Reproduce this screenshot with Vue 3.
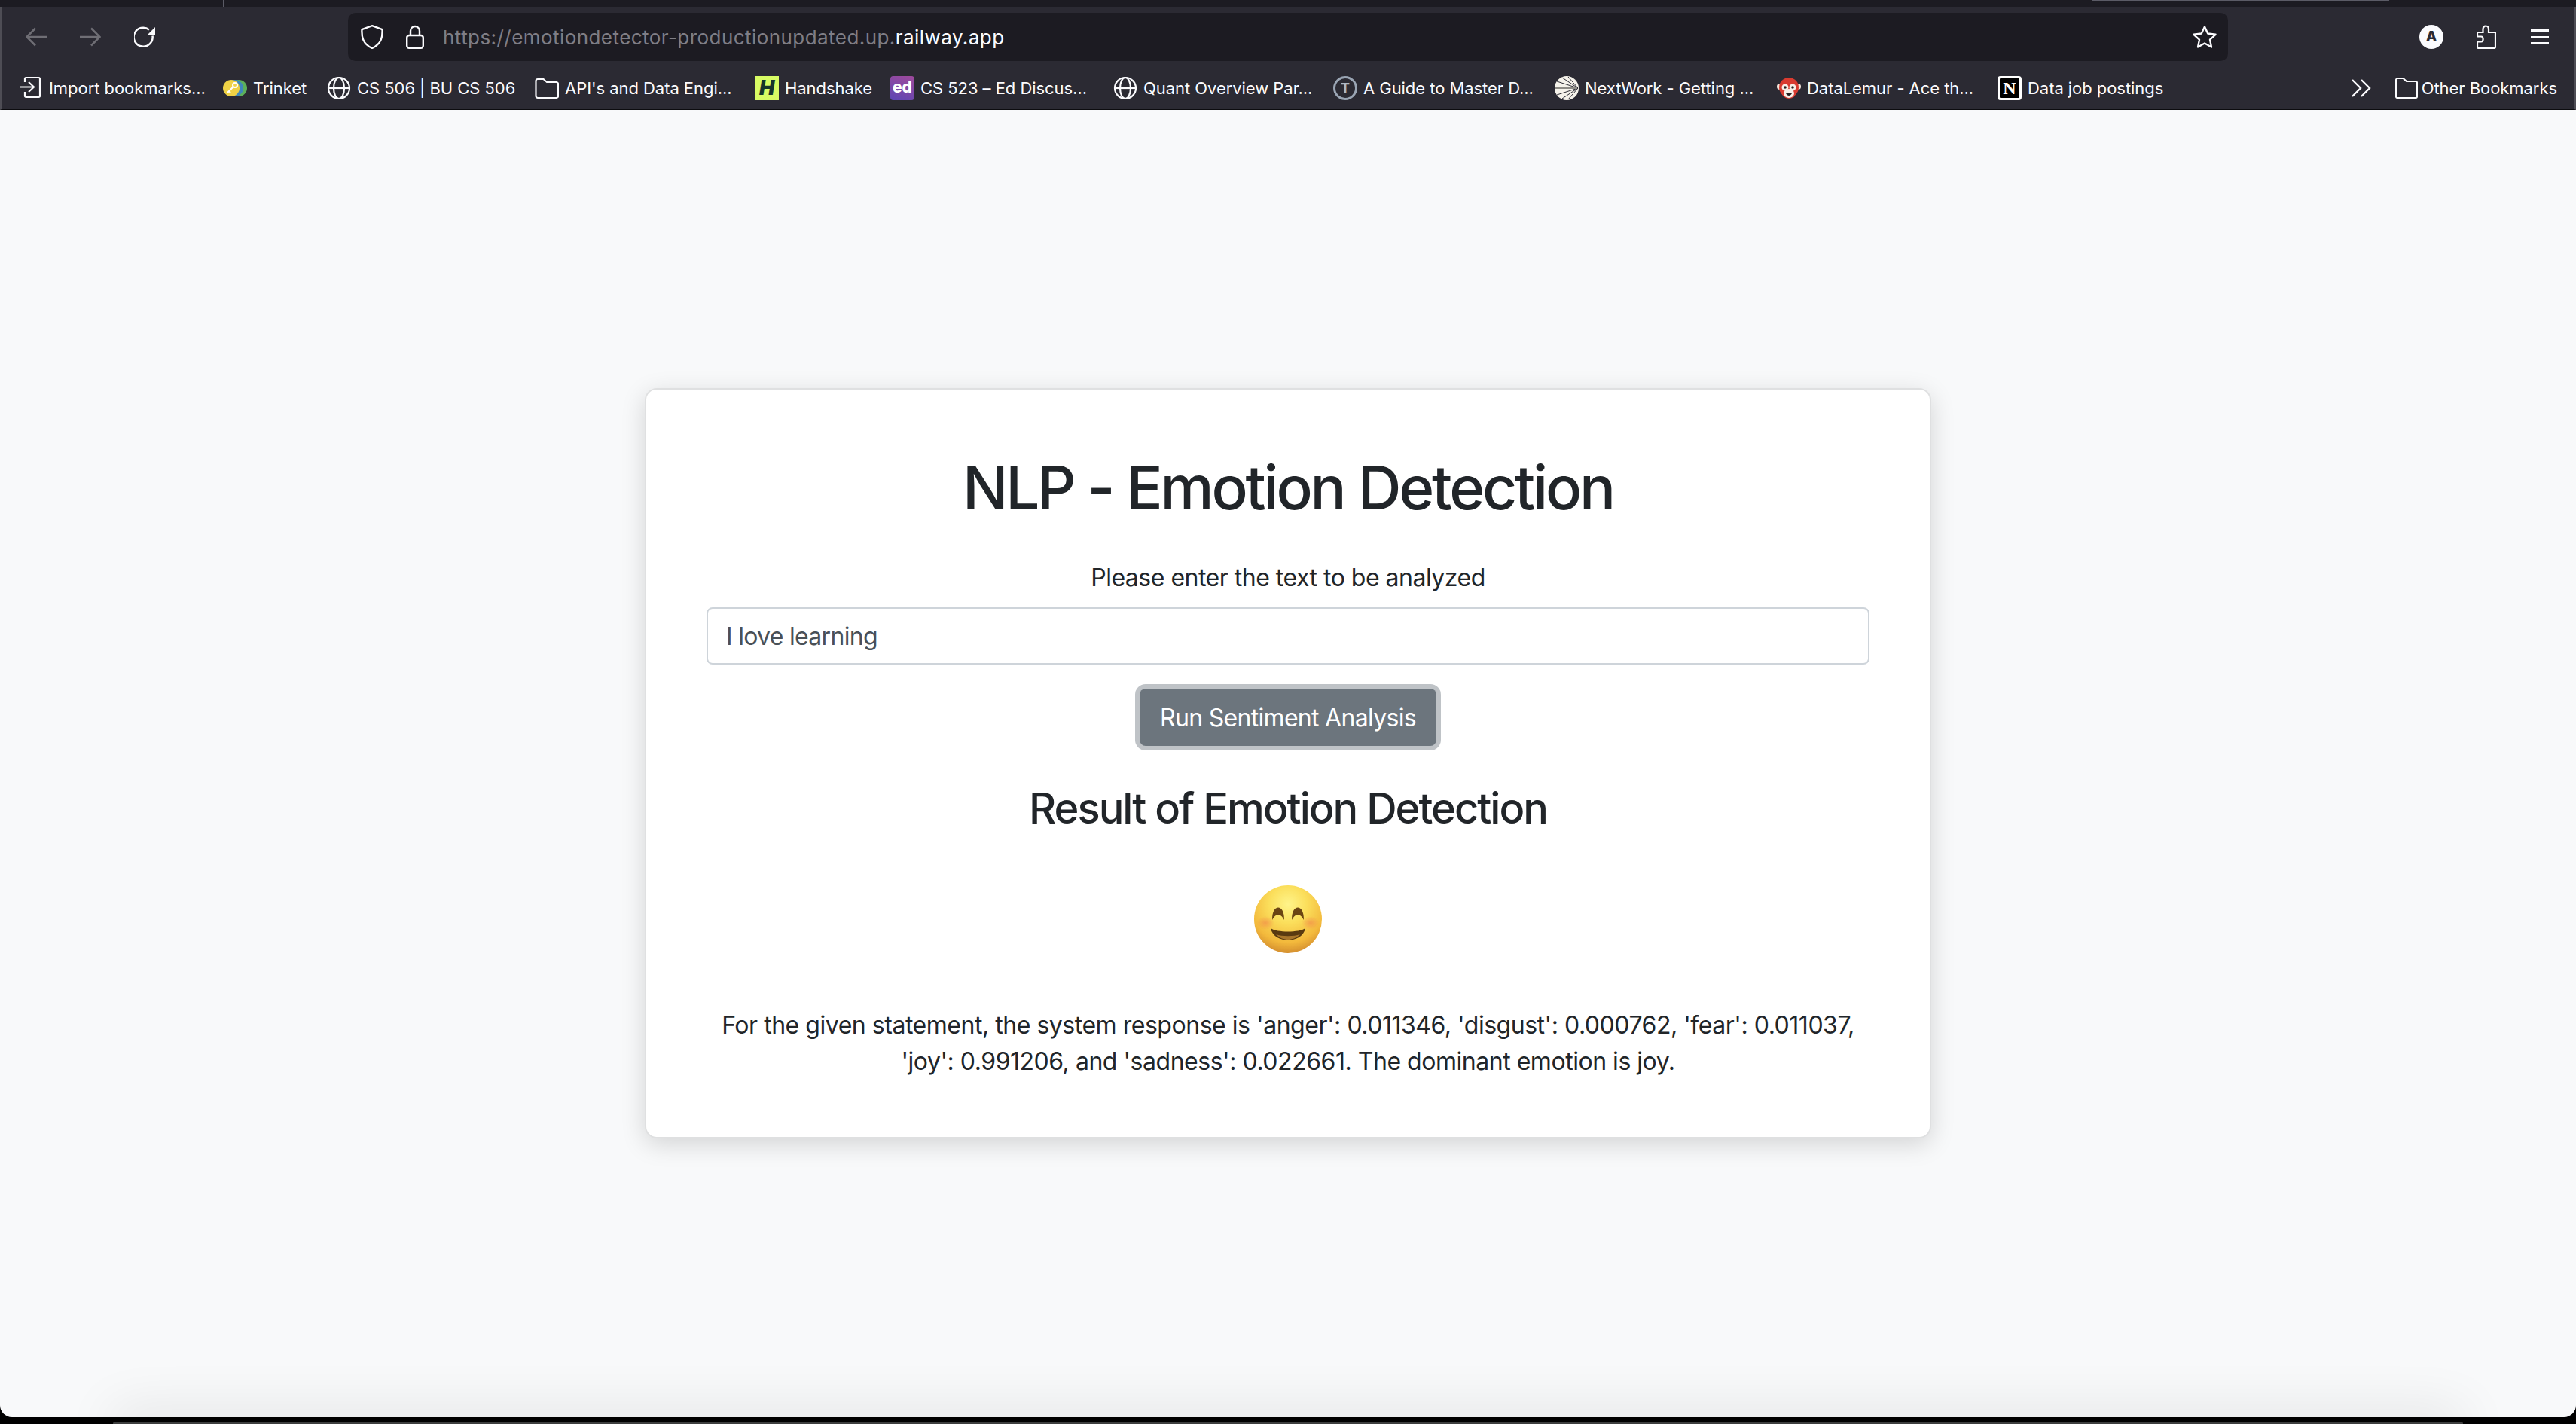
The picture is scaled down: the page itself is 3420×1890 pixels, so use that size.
<script setup>
import { ref } from "vue";

const inputText = ref("I love learning");

const bookmarks = [
  { icon: "import", label: "Import bookmarks...", w: 207 },
  { icon: "trinket", label: "Trinket", w: 74 },
  { icon: "globe", label: "CS 506 | BU CS 506", w: 212 },
  { icon: "folder", label: "API's and Data Engi...", w: 228 },
  { icon: "handshake", label: "Handshake", w: 116 },
  { icon: "ed", label: "CS 523 – Ed Discus...", w: 232 },
  { icon: "globe", label: "Quant Overview Par...", w: 228 },
  { icon: "guide", label: "A Guide to Master D...", w: 230 },
  { icon: "nextwork", label: "NextWork - Getting ...", w: 231 },
  { icon: "lemur", label: "DataLemur - Ace th...", w: 229 },
  { icon: "notion", label: "Data job postings", w: 184 },
];
</script>

<template>
  <div class="screen">
    <header class="browser">
      <div class="tabstrip">
        <span class="tab-sep"></span>
        <span class="tab-hint"></span>
      </div>

      <div class="toolbar">
        <div class="nav">
          <svg class="nav-icon dim" viewBox="0 0 28 28"><path d="M28 14H2M13 2.500 1.500 14 13 25.500" /></svg>
          <svg class="nav-icon dim" viewBox="0 0 28 28"><path d="M0 14H26M15 2.500 26.500 14 15 25.500" /></svg>
          <svg class="nav-icon" viewBox="0 0 28 28">
            <path d="M24.500 12.500A12.500 12.500 0 1 1 20 4.500" />
            <path class="solid" d="M28 1v10H18z" />
          </svg>
        </div>
        <div class="urlbar">
          <svg class="shield" viewBox="0 0 30 32"><path d="M15 1.200 28.500 6c.5 9-.5 19-13.500 25C2 25 1 15 1.500 6z" /></svg>
          <svg class="lock" viewBox="0 0 24 32">
            <path d="M6 14V8a6 6 0 0 1 12 0v6" />
            <rect x="1.200" y="14" width="21.600" height="16.800" rx="3" />
          </svg>
          <span class="url">https://emotiondetector-productionupdated.up.<b>railway.app</b></span>
          <svg class="star" viewBox="0 0 32 30">
            <path d="M16 1.500 20.200 10.500 30.500 11.800 23 18.700 25 28.500 16 23.500 7 28.500 9 18.700 1.500 11.800 11.800 10.500z" />
          </svg>
        </div>
        <div class="tools">
          <span class="avatar">A</span>
          <svg class="puzzle" viewBox="0 0 26 32">
            <path d="M1 22.500h5c3.500 0 3.500-7 0-7H1V10h7.500V6c0-6 7.500-6 7.500 0v4H25v19.500a1.500 1.500 0 0 1-1.500 1.500H2.500A1.500 1.500 0 0 1 1 29.500z" />
          </svg>
          <div class="menu"><i></i><i></i><i></i></div>
        </div>
      </div>

      <div class="bookmarks">
        <div class="bm-list">
          <div v-for="b in bookmarks" :key="b.label" class="bm">
            <span class="fav">
              <svg v-if="b.icon === 'import'" viewBox="0 0 32 32" class="line">
                <path d="M1 14.500H19M13 8l7 6.500-7 6.500M8 8V3.500A1.500 1.500 0 0 1 9.500 2h17A1.500 1.500 0 0 1 28 3.500v23a1.500 1.500 0 0 1-1.500 1.500h-17A1.500 1.500 0 0 1 8 26.500V21" />
              </svg>
              <svg v-else-if="b.icon === 'trinket'" viewBox="0 0 32 32">
                <circle cx="21" cy="16" r="11" fill="#5cb05b" />
                <circle cx="16" cy="16" r="11" fill="#3f87bd" />
                <circle cx="11" cy="16" r="11" fill="#efd246" />
                <circle cx="16" cy="12" r="3" fill="none" stroke="#fff" stroke-width="2" />
                <path d="M14 14 6 22M8 20l2 2" stroke="#fff" stroke-width="2" fill="none" />
              </svg>
              <svg v-else-if="b.icon === 'globe'" viewBox="0 0 32 32" class="line">
                <circle cx="16" cy="16" r="14" />
                <ellipse cx="16" cy="16" rx="7" ry="14" />
                <path d="M2 16H30" />
              </svg>
              <svg v-else-if="b.icon === 'folder'" viewBox="0 0 32 32" class="line">
                <path d="M1.500 6.500A2.500 2.500 0 0 1 4 4h7.500l4.500 4h12.500A2.500 2.500 0 0 1 31 10.500v16a2.500 2.500 0 0 1-2.500 2.500H4a2.500 2.500 0 0 1-2.500-2.500z" />
              </svg>
              <span v-else-if="b.icon === 'handshake'" class="fav-hs">H</span>
              <span v-else-if="b.icon === 'ed'" class="fav-ed">ed</span>
              <span v-else-if="b.icon === 'guide'" class="fav-guide">T</span>
              <svg v-else-if="b.icon === 'nextwork'" viewBox="0 0 32 32">
                <circle cx="16" cy="16" r="16" fill="#f5f2ea" />
                <path d="M10 2l21 14M18 1 31 16M3 7l28 9M3 25l28-9M10 30l21-14M18 31 31 16" stroke="#2b2a33" stroke-width="1" fill="none" />
                <path d="M0 16H30" stroke="#8e8c86" stroke-width="2" />
              </svg>
              <svg v-else-if="b.icon === 'lemur'" viewBox="0 0 32 32">
                <circle cx="4" cy="14" r="4" fill="#f3e6dc" />
                <circle cx="28" cy="14" r="4" fill="#f3e6dc" />
                <circle cx="16" cy="15" r="13" fill="#d93b30" />
                <ellipse cx="16" cy="21" rx="10" ry="9" fill="#d93b30" />
                <circle cx="11" cy="15" r="4.500" fill="#f8efe7" />
                <circle cx="21" cy="15" r="4.500" fill="#f8efe7" />
                <ellipse cx="16" cy="23" rx="7" ry="6" fill="#f8efe7" />
                <circle cx="11" cy="15" r="1.800" fill="#231f20" />
                <circle cx="21" cy="15" r="1.800" fill="#231f20" />
                <path d="M12 23c2 4 6 4 8 0z" fill="#231f20" />
              </svg>
              <span v-else-if="b.icon === 'notion'" class="fav-notion">N</span>
            </span>
            <span class="bm-label" :style="{ width: b.w + 'px' }">{{ b.label }}</span>
          </div>
        </div>
        <div class="bm-end">
          <svg class="chevrons" viewBox="0 0 26 24"><path d="M1 1 12 12 1 23M13 1 24 12 13 23" /></svg>
          <div class="bm other">
            <span class="fav small">
              <svg viewBox="0 0 30 28" class="line">
                <path d="M1 3.500A2.500 2.500 0 0 1 3.500 1h7l4.500 4h12.500A2 2 0 0 1 29 7v18a2 2 0 0 1-2 2H3a2 2 0 0 1-2-2z" />
              </svg>
            </span>
            <span class="bm-label">Other Bookmarks</span>
          </div>
        </div>
      </div>
    </header>

    <main class="page">
      <section class="card">
        <h1 class="title">NLP - Emotion Detection</h1>
        <label class="prompt" for="textToAnalyze">Please enter the text to be analyzed</label>
        <input id="textToAnalyze" v-model="inputText" class="field" type="text" />
        <button class="run-btn" type="button">Run Sentiment Analysis</button>
        <h3 class="result-title">Result of Emotion Detection</h3>
        <svg class="emoji" viewBox="0 0 90 90">
          <defs>
            <radialGradient id="faceFill" cx="50%" cy="28%" r="78%">
              <stop offset="0" stop-color="#fff48a" />
              <stop offset="0.35" stop-color="#fbdf5c" />
              <stop offset="0.72" stop-color="#f3b93c" />
              <stop offset="1" stop-color="#c97f2a" />
            </radialGradient>
            <radialGradient id="cheek">
              <stop offset="0" stop-color="#f2924a" stop-opacity="0.75" />
              <stop offset="1" stop-color="#f2924a" stop-opacity="0" />
            </radialGradient>
          </defs>
          <circle cx="45" cy="45" r="45" fill="url(#faceFill)" />
          <ellipse cx="15" cy="50" rx="12" ry="9" fill="url(#cheek)" />
          <ellipse cx="75" cy="50" rx="12" ry="9" fill="url(#cheek)" />
          <path d="M24 46C24 34 28 29.500 32 29.500S40 34 40 46C37 41 35 39 32 39S27 41 24 46Z" fill="#6b4513" />
          <path d="M50 46C50 34 54 29.500 58 29.500S66 34 66 46C63 41 61 39 58 39S53 41 50 46Z" fill="#6b4513" />
          <path d="M22 57C30 63 60 63 68 57 66 68 55 72.500 45 72.500S24 68 22 57Z" fill="#5a3a10" />
          <path d="M29 65C37 68 53 68 61 65 56 70 50 72 45 72S34 70 29 65Z" fill="#a8752a" />
        </svg>
        <p class="response">
          For the given statement, the system response is 'anger': 0.011346, 'disgust': 0.000762, 'fear': 0.011037,
          'joy': 0.991206, and 'sadness': 0.022661. The dominant emotion is joy.
        </p>
      </section>
      <div class="dock-glow"></div>
    </main>

    <footer class="desk"><div class="dock"></div></footer>
  </div>
</template>

<style>
html,
body {
  margin: 0;
  background: #000;
}
</style>

<style scoped>
.screen {
  width: 3420px;
  height: 1890px;
  display: flex;
  flex-direction: column;
  overflow: hidden;
  font-family: Inter, "Liberation Sans", sans-serif;
  background: #000;
}

/* browser chrome */
.browser {
  flex: none;
  height: 146px;
  display: flex;
  flex-direction: column;
  background: #2b2a33;
  border-bottom: 1px solid #0c0c0f;
  box-sizing: border-box;
  border-left: 2px solid #4e4d55;
  border-right: 2px solid #4e4d55;
  color: #fbfbfe;
}
.tabstrip {
  flex: none;
  height: 9px;
  margin: 0 -2px;
  background: #1c1b22;
  position: relative;
}
.tab-sep {
  position: absolute;
  left: 296px;
  top: 0;
  width: 2px;
  height: 9px;
  background: #5b5b66;
}
.tab-hint {
  position: absolute;
  left: 2778px;
  top: 0;
  width: 394px;
  height: 1px;
  background: #5b5b66;
}
.toolbar {
  flex: none;
  height: 80px;
  padding-top: 8px;
  box-sizing: border-box;
  display: flex;
  align-items: flex-start;
}
.nav {
  width: 460px;
  height: 64px;
  padding-left: 32px;
  box-sizing: border-box;
  display: flex;
  align-items: center;
  gap: 44px;
}
.nav-icon {
  width: 28px;
  height: 28px;
  fill: none;
  stroke: #fbfbfe;
  stroke-width: 2.5;
}
.nav-icon.dim {
  stroke: #6f6e75;
}
.nav-icon .solid {
  fill: #fbfbfe;
  stroke: none;
}
.urlbar {
  width: 2496px;
  height: 64px;
  display: flex;
  align-items: center;
  background: #1c1b22;
  border-radius: 10px;
  padding-left: 17px;
  box-sizing: border-box;
}
.shield {
  width: 30px;
  height: 32px;
  fill: none;
  stroke: #fbfbfe;
  stroke-width: 2.4;
}
.lock {
  width: 24px;
  height: 32px;
  margin-left: 30px;
  fill: none;
  stroke: #fbfbfe;
  stroke-width: 2.4;
}
.url {
  margin-left: 25px;
  font-size: 26px;
  letter-spacing: 0.44px;
  color: #7f7e86;
  white-space: nowrap;
}
.url b {
  font-weight: 400;
  color: #fbfbfe;
}
.star {
  margin-left: auto;
  margin-right: 15px;
  width: 32px;
  height: 30px;
  fill: none;
  stroke: #fbfbfe;
  stroke-width: 2.4;
  stroke-linejoin: round;
}
.tools {
  flex: 1;
  height: 64px;
  display: flex;
  align-items: center;
  padding-left: 254px;
  box-sizing: border-box;
}
.avatar {
  width: 32px;
  height: 32px;
  border-radius: 50%;
  background: #fbfbfe;
  color: #2b2a33;
  font-size: 19px;
  font-weight: 800;
  text-align: center;
  line-height: 32px;
}
.puzzle {
  margin-left: 44px;
  width: 26px;
  height: 32px;
  fill: none;
  stroke: #fbfbfe;
  stroke-width: 2.2;
}
.menu {
  margin-left: 46px;
  width: 24px;
  display: flex;
  flex-direction: column;
  gap: 6px;
}
.menu i {
  display: block;
  height: 2.500px;
  background: #fbfbfe;
}

/* bookmarks toolbar */
.bookmarks {
  flex: 1;
  display: flex;
  align-items: center;
  justify-content: space-between;
  padding: 0 23px 0 23px;
}
.bm-list {
  display: flex;
  gap: 24px;
}
.bm-end {
  display: flex;
  align-items: center;
  gap: 32px;
}
.bm {
  display: flex;
  align-items: center;
  gap: 8px;
}
.bm.other {
  gap: 5px;
}
.bm-label {
  font-size: 22px;
  white-space: nowrap;
  letter-spacing: -0.05px;
}
.fav {
  width: 32px;
  height: 32px;
  flex: none;
  display: flex;
  align-items: center;
  justify-content: center;
}
.fav svg {
  width: 32px;
  height: 32px;
}
.fav.small {
  width: 30px;
  height: 28px;
}
.fav.small svg {
  width: 30px;
  height: 28px;
}
.line {
  fill: none;
  stroke: #fbfbfe;
  stroke-width: 2.2;
}
.chevrons {
  width: 26px;
  height: 24px;
  fill: none;
  stroke: #fbfbfe;
  stroke-width: 2.4;
}
.fav-hs {
  width: 32px;
  height: 32px;
  background: #d8fb64;
  color: #16342b;
  font-size: 27px;
  font-weight: 900;
  font-style: italic;
  line-height: 32px;
  text-align: center;
}
.fav-ed {
  width: 32px;
  height: 32px;
  border-radius: 4px;
  background: linear-gradient(200deg, #a04a9c, #5c46b4);
  color: #fff;
  font-size: 21px;
  font-weight: 800;
  line-height: 30px;
  text-align: center;
}
.fav-guide {
  width: 26px;
  height: 26px;
  border-radius: 50%;
  border: 3px solid #9aa5b4;
  color: #aeb7c3;
  font-size: 18px;
  font-weight: 700;
  line-height: 26px;
  text-align: center;
}
.fav-notion {
  width: 26px;
  height: 26px;
  border: 3px solid #fff;
  border-radius: 4px;
  background: #000;
  color: #fff;
  font-family: "Liberation Serif", serif;
  font-size: 24px;
  font-weight: 700;
  line-height: 26px;
  text-align: center;
}

/* page */
.page {
  flex: 1;
  position: relative;
  overflow: hidden;
  background: #f8f9fa;
  border-radius: 0 0 16px 16px;
  padding-top: 369px;
  box-sizing: border-box;
}
.card {
  width: 1708px;
  height: 996px;
  margin: 0 auto;
  padding: 0 80px;
  box-sizing: border-box;
  display: flex;
  flex-direction: column;
  align-items: center;
  background: #fff;
  border: 2px solid #dfe0e1;
  border-radius: 16px;
  box-shadow: 0 8px 32px rgba(0, 0, 0, 0.15);
  color: #212529;
}
.title {
  margin: 82px 0 0;
  font-size: 80px;
  font-weight: 500;
  line-height: 96px;
  letter-spacing: -3.2px;
}
.prompt {
  margin-top: 48px;
  font-size: 32px;
  line-height: 48px;
  letter-spacing: -0.5px;
}
.field {
  width: 100%;
  height: 76px;
  margin-top: 15px;
  padding: 0 24px;
  box-sizing: border-box;
  border: 2px solid #ced4da;
  border-radius: 8px;
  background: #fff;
  color: #495057;
  font-family: inherit;
  font-size: 32px;
  letter-spacing: -0.7px;
  outline: none;
}
.run-btn {
  width: 394px;
  height: 76px;
  margin-top: 32px;
  flex: none;
  border: none;
  border-radius: 8px;
  background: #6c757d;
  box-shadow: 0 0 0 6px #bfc3c7;
  color: #fff;
  font-family: inherit;
  font-size: 32px;
  letter-spacing: -0.7px;
}
.result-title {
  margin: 50px 0 0;
  font-size: 56px;
  font-weight: 500;
  line-height: 67px;
  letter-spacing: -2px;
}
.emoji {
  width: 90px;
  height: 90px;
  margin-top: 68px;
  flex: none;
}
.response {
  margin: 72px 0 0;
  font-size: 32px;
  line-height: 48px;
  letter-spacing: -0.47px;
  text-align: center;
}
.dock-glow {
  position: absolute;
  left: 150px;
  right: 150px;
  bottom: -20px;
  height: 20px;
  box-shadow: 0 0 70px rgba(0, 0, 0, 0.2);
}

/* desktop strip under the window */
.desk {
  flex: none;
  height: 9px;
  padding-top: 6px;
  box-sizing: border-box;
  background: #000;
}
.dock {
  height: 3px;
  margin: 0 150px;
  border-radius: 4px 4px 0 0;
  background: #3d3e3e;
}
</style>
